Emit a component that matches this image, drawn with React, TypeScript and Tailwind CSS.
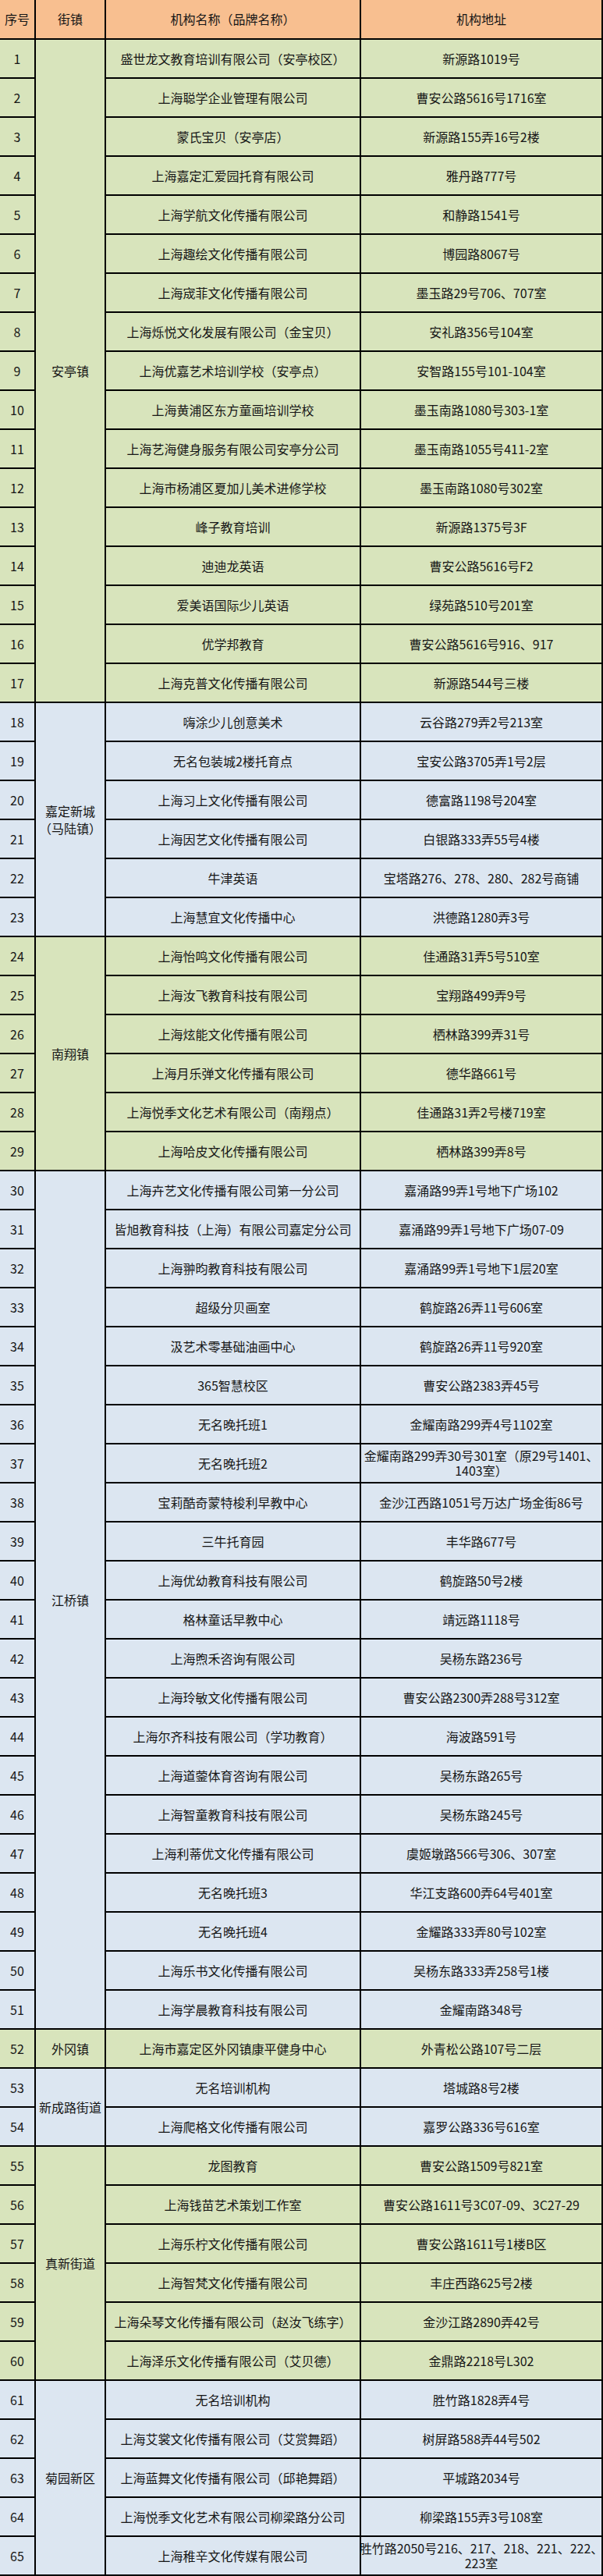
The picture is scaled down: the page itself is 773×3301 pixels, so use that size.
type Row = [string, string];

type Group = {
  town: string[];
  tone: 'green' | 'blue';
  span: string;
  rows: Row[];
};

const groups: Group[] = [
  {
    town: ['安亭镇'],
    tone: 'green',
    span: 'row-span-17',
    rows: [
      ['盛世龙文教育培训有限公司（安亭校区）', '新源路1019号'],
      ['上海聪学企业管理有限公司', '曹安公路5616号1716室'],
      ['蒙氏宝贝（安亭店）', '新源路155弄16号2楼'],
      ['上海嘉定汇爱园托育有限公司', '雅丹路777号'],
      ['上海学航文化传播有限公司', '和静路1541号'],
      ['上海趣绘文化传播有限公司', '博园路8067号'],
      ['上海宬菲文化传播有限公司', '墨玉路29号706、707室'],
      ['上海烁悦文化发展有限公司（金宝贝）', '安礼路356号104室'],
      ['上海优嘉艺术培训学校（安亭点）', '安智路155号101-104室'],
      ['上海黄浦区东方童画培训学校', '墨玉南路1080号303-1室'],
      ['上海艺海健身服务有限公司安亭分公司', '墨玉南路1055号411-2室'],
      ['上海市杨浦区夏加儿美术进修学校', '墨玉南路1080号302室'],
      ['峰子教育培训', '新源路1375号3F'],
      ['迪迪龙英语', '曹安公路5616号F2'],
      ['爱美语国际少儿英语', '绿苑路510号201室'],
      ['优学邦教育', '曹安公路5616号916、917'],
      ['上海克普文化传播有限公司', '新源路544号三楼'],
    ],
  },
  {
    town: ['嘉定新城', '（马陆镇）'],
    tone: 'blue',
    span: 'row-span-6',
    rows: [
      ['嗨涂少儿创意美术', '云谷路279弄2号213室'],
      ['无名包装城2楼托育点', '宝安公路3705弄1号2层'],
      ['上海习上文化传播有限公司', '德富路1198号204室'],
      ['上海因艺文化传播有限公司', '白银路333弄55号4楼'],
      ['牛津英语', '宝塔路276、278、280、282号商铺'],
      ['上海慧宜文化传播中心', '洪德路1280弄3号'],
    ],
  },
  {
    town: ['南翔镇'],
    tone: 'green',
    span: 'row-span-6',
    rows: [
      ['上海怡鸣文化传播有限公司', '佳通路31弄5号510室'],
      ['上海汝飞教育科技有限公司', '宝翔路499弄9号'],
      ['上海炫能文化传播有限公司', '栖林路399弄31号'],
      ['上海月乐弹文化传播有限公司', '德华路661号'],
      ['上海悦季文化艺术有限公司（南翔点）', '佳通路31弄2号楼719室'],
      ['上海哈皮文化传播有限公司', '栖林路399弄8号'],
    ],
  },
  {
    town: ['江桥镇'],
    tone: 'blue',
    span: 'row-span-22',
    rows: [
      ['上海卉艺文化传播有限公司第一分公司', '嘉涌路99弄1号地下广场102'],
      ['皆旭教育科技（上海）有限公司嘉定分公司', '嘉涌路99弄1号地下广场07-09'],
      ['上海翀昀教育科技有限公司', '嘉涌路99弄1号地下1层20室'],
      ['超级分贝画室', '鹤旋路26弄11号606室'],
      ['汲艺术零基础油画中心', '鹤旋路26弄11号920室'],
      ['365智慧校区', '曹安公路2383弄45号'],
      ['无名晚托班1', '金耀南路299弄4号1102室'],
      ['无名晚托班2', '金耀南路299弄30号301室（原29号1401、\n1403室）'],
      ['宝莉酷奇蒙特梭利早教中心', '金沙江西路1051号万达广场金街86号'],
      ['三牛托育园', '丰华路677号'],
      ['上海优幼教育科技有限公司', '鹤旋路50号2楼'],
      ['格林童话早教中心', '靖远路1118号'],
      ['上海煦禾咨询有限公司', '吴杨东路236号'],
      ['上海玲敏文化传播有限公司', '曹安公路2300弄288号312室'],
      ['上海尔齐科技有限公司（学功教育）', '海波路591号'],
      ['上海道蓥体育咨询有限公司', '吴杨东路265号'],
      ['上海智童教育科技有限公司', '吴杨东路245号'],
      ['上海利蒂优文化传播有限公司', '虞姬墩路566号306、307室'],
      ['无名晚托班3', '华江支路600弄64号401室'],
      ['无名晚托班4', '金耀路333弄80号102室'],
      ['上海乐书文化传播有限公司', '吴杨东路333弄258号1楼'],
      ['上海学晨教育科技有限公司', '金耀南路348号'],
    ],
  },
  {
    town: ['外冈镇'],
    tone: 'green',
    span: 'row-span-1',
    rows: [['上海市嘉定区外冈镇康平健身中心', '外青松公路107号二层']],
  },
  {
    town: ['新成路街道'],
    tone: 'blue',
    span: 'row-span-2',
    rows: [
      ['无名培训机构', '塔城路8号2楼'],
      ['上海爬格文化传播有限公司', '嘉罗公路336号616室'],
    ],
  },
  {
    town: ['真新街道'],
    tone: 'green',
    span: 'row-span-6',
    rows: [
      ['龙图教育', '曹安公路1509号821室'],
      ['上海钱苗艺术策划工作室', '曹安公路1611号3C07-09、3C27-29'],
      ['上海乐柠文化传播有限公司', '曹安公路1611号1楼B区'],
      ['上海智梵文化传播有限公司', '丰庄西路625号2楼'],
      ['上海朵琴文化传播有限公司（赵汝飞练字）', '金沙江路2890弄42号'],
      ['上海泽乐文化传播有限公司（艾贝德）', '金鼎路2218号L302'],
    ],
  },
  {
    town: ['菊园新区'],
    tone: 'blue',
    span: 'row-span-5',
    rows: [
      ['无名培训机构', '胜竹路1828弄4号'],
      ['上海艾裳文化传播有限公司（艾赏舞蹈）', '树屏路588弄44号502'],
      ['上海蓝舞文化传播有限公司（邱艳舞蹈）', '平城路2034号'],
      ['上海悦季文化艺术有限公司柳梁路分公司', '柳梁路155弄3号108室'],
      ['上海稚辛文化传媒有限公司', '胜竹路2050号216、217、218、221、222、\n223室'],
    ],
  },
];

const cell = 'flex items-center justify-center text-center border-r-2 border-b-2 border-black whitespace-nowrap leading-[19px]';

function Lines({ text }: { text: string }) {
  const parts = text.split('\n');
  return (
    <span>
      {parts.map((p, i) => (
        <span key={i} className="block">
          {p}
        </span>
      ))}
    </span>
  );
}

export default function App() {
  let n = 0;
  return (
    <div
      className="w-[773px] bg-white text-[16px] text-[#161616]"
      style={{ fontFamily: '"Noto Sans CJK SC", "Noto Sans", sans-serif' }}
    >
      <div className="grid grid-cols-[46px_90px_327px_310px] grid-rows-[51px_repeat(65,50px)]">
        <div className={`${cell} col-start-1 bg-[#f8bf90]`}>序号</div>
        <div className={`${cell} col-start-2 bg-[#f8bf90]`}>街镇</div>
        <div className={`${cell} col-start-3 bg-[#f8bf90]`}>机构名称（品牌名称）</div>
        <div className={`${cell} col-start-4 bg-[#f8bf90]`}>机构地址</div>

        {groups.map((g) => {
          const bg = g.tone === 'green' ? 'bg-[#d8e4bc]' : 'bg-[#dce6f1]';
          return g.rows.map((r, i) => {
            n += 1;
            return (
              <div key={n} className="contents">
                <div className={`${cell} col-start-1 ${bg}`}>{n}</div>
                {i === 0 && (
                  <div className={`${cell} col-start-2 ${g.span} ${bg}`}>
                    <span>
                      {g.town.map((t) => (
                        <span key={t} className="block leading-[22px]">
                          {t}
                        </span>
                      ))}
                    </span>
                  </div>
                )}
                <div className={`${cell} col-start-3 ${bg}`}>{r[0]}</div>
                <div className={`${cell} col-start-4 ${bg}`}>
                  <Lines text={r[1]} />
                </div>
              </div>
            );
          });
        })}
      </div>
    </div>
  );
}
